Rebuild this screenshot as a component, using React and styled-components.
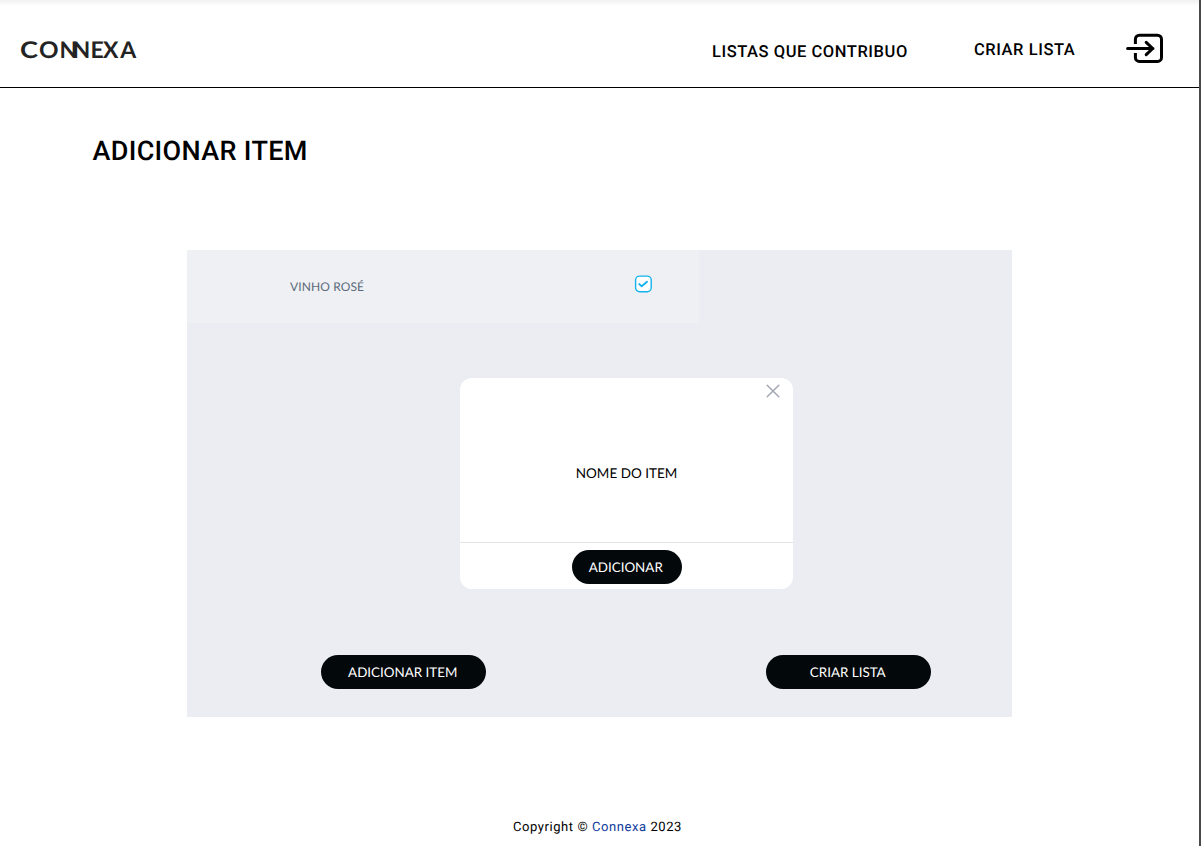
import React from "react";
import styled, { createGlobalStyle } from "styled-components";

const GlobalStyle = createGlobalStyle`
  *, *::before, *::after { box-sizing: border-box; }
  body { margin: 0; background: #fff; overflow: hidden; text-rendering: geometricPrecision; }
  button { font: inherit; border: 0; padding: 0; cursor: pointer; }
`;

const Page = styled.div`
  height: 846px;
  width: 1201px;
  display: flex;
  flex-direction: column;
  border-right: 2px solid #48494c;
  color: #000;
  font-family: Roboto, "Liberation Sans", sans-serif;
`;

const Header = styled.header`
  height: 88px;
  flex: none;
  display: flex;
  align-items: flex-start;
  padding: 32px 34px 0 18px;
  border-bottom: 1px solid #000;
  background: linear-gradient(#f1f1f1, #fff 6px);
`;

const Logo = styled.svg`
  width: 124px;
  height: 34px;
  margin-right: auto;
  font: 700 23px Lato, sans-serif;
  fill: #232323;
`;

const Nav = styled.nav`
  display: flex;
  align-items: flex-start;
`;

const NavLink = styled.a`
  width: ${(p) => p.$width}px;
  padding-top: ${(p) => p.$drop}px;
  font-size: 16.5px;
  line-height: 20px;
  font-weight: 500;
  letter-spacing: ${(p) => p.$spacing}px;
  white-space: nowrap;
`;

const ExitIcon = styled.svg`
  width: 40px;
  height: 32px;
  fill: none;
  stroke: #000;
  stroke-linecap: round;
  stroke-linejoin: round;
`;

const Title = styled.h1`
  margin: 46px 0 0 92.5px;
  font-size: 27px;
  line-height: 34px;
  font-weight: 500;
  letter-spacing: 0.33px;
`;

const Panel = styled.main`
  width: 825px;
  height: 467px;
  margin: 82px 0 0 187px;
  display: flex;
  flex-direction: column;
  background: #ecedf2;
  font-family: Lato, sans-serif;
`;

const ItemRow = styled.div`
  width: 512px;
  height: 73px;
  display: flex;
  align-items: flex-start;
  justify-content: space-between;
  padding: 25px 47px 0 103px;
  background: #eff0f4;
`;

const ItemName = styled.span`
  padding-top: 3px;
  font-size: 12px;
  line-height: 18px;
  letter-spacing: 0.12px;
  color: #5c6b7c;
`;

const CheckIcon = styled.svg`
  width: 18px;
  height: 18px;
  stroke: #12b3ec;
  stroke-linecap: round;
  stroke-linejoin: round;
`;

const Card = styled.section`
  width: 333px;
  height: 211px;
  margin: 55px 0 0 273px;
  display: flex;
  flex-direction: column;
  border-radius: 12px;
  background: #fff;
`;

const CardTop = styled.div`
  height: 26px;
  display: flex;
  justify-content: flex-end;
  padding: 5px 12px 0 0;
`;

const CloseIcon = styled.svg`
  width: 16px;
  height: 16px;
  stroke: #a4a8b5;
  stroke-width: 1.5;
  stroke-linecap: round;
`;

const CardBody = styled.div`
  height: 138px;
  display: flex;
  align-items: center;
  justify-content: center;
  font-size: 13.5px;
  line-height: 20px;
`;

const CardFooter = styled.div`
  flex: 1;
  display: flex;
  justify-content: center;
  padding-top: 7px;
  border-top: 1px solid #e3e4e8;
`;

const PillButton = styled.button`
  width: ${(p) => p.$width}px;
  height: 34px;
  padding-right: 1.5px;
  border-radius: 17px;
  background: #03080b;
  color: #fff;
  font-size: 13.4px;
  line-height: 34px;
  text-align: center;
  text-rendering: inherit;
`;

const Actions = styled.div`
  display: flex;
  justify-content: space-between;
  padding: 66px 81px 0 134px;
`;

const Footer = styled.footer`
  margin: 101px 0 0 513px;
  font-size: 13px;
  line-height: 20px;
  letter-spacing: 0.57px;
`;

const BrandLink = styled.a`
  color: #0f3c9e;
`;

export default function App() {
  return (
    <>
      <GlobalStyle />
      <Page>
        <Header>
          <Logo viewBox="0 0 124 34" role="img" aria-label="Connexa">
            <text x="2" y="26" textLength="18" lengthAdjust="spacingAndGlyphs">C</text>
            <text x="21" y="26" textLength="19.6" lengthAdjust="spacingAndGlyphs">O</text>
            <text x="41.4 54.6 72.4 85 102.2" y="26">NNEXA</text>
          </Logo>
          <Nav>
            <NavLink $width={262} $drop={11} $spacing={0.55}>LISTAS QUE CONTRIBUO</NavLink>
            <NavLink $width={151} $drop={9} $spacing={0.55}>CRIAR LISTA</NavLink>
            <ExitIcon viewBox="0 0 40 32">
              <path d="M10.4 12V7.2a4 4 0 0 1 4-4h18.1a4 4 0 0 1 4 4v18.2a4 4 0 0 1-4 4H14.4a4 4 0 0 1-4-4V21" strokeWidth="3" strokeLinecap="butt" />
              <path d="M2.6 16.5H28M21.2 10.3l6.5 6.2-6.5 6.2" strokeWidth="3" />
            </ExitIcon>
          </Nav>
        </Header>
        <Title>ADICIONAR ITEM</Title>
        <Panel>
          <ItemRow>
            <ItemName>VINHO ROSÉ</ItemName>
            <CheckIcon viewBox="0 0 18 18">
              <rect x="1.6" y="1.1" width="15.6" height="15.6" rx="4" fill="#fff" strokeWidth="1.4" />
              <path d="M5.2 9l2.5 2.3 5.3-4.6" fill="none" strokeWidth="1.8" />
            </CheckIcon>
          </ItemRow>
          <Card>
            <CardTop>
              <CloseIcon viewBox="0 0 16 16">
                <path d="M2.2 2.2l11.6 11.6M13.8 2.2L2.2 13.8" />
              </CloseIcon>
            </CardTop>
            <CardBody>NOME DO ITEM</CardBody>
            <CardFooter>
              <PillButton $width={110}>ADICIONAR</PillButton>
            </CardFooter>
          </Card>
          <Actions>
            <PillButton $width={165}>ADICIONAR ITEM</PillButton>
            <PillButton $width={165}>CRIAR LISTA</PillButton>
          </Actions>
        </Panel>
        <Footer>
          Copyright © <BrandLink>Connexa</BrandLink> 2023
        </Footer>
      </Page>
    </>
  );
}
